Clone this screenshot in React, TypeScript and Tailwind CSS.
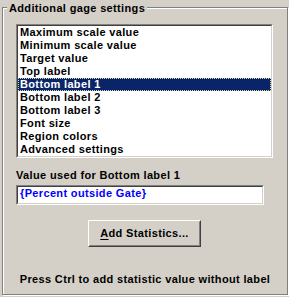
const items = [
  'Maximum scale value',
  'Minimum scale value',
  'Target value',
  'Top label',
  'Bottom label 1',
  'Bottom label 2',
  'Bottom label 3',
  'Font size',
  'Region colors',
  'Advanced settings',
];

const selected = 4;

export default function App() {
  return (
    <div
      className="w-[289px] h-[297px] bg-[#d4d0c8] overflow-hidden pl-[2px] pt-[7px] text-[11px] leading-[13px] font-bold text-black tracking-[0.35px]"
      style={{ fontFamily: '"Liberation Sans", Arial, sans-serif' }}
    >
      {/* group box */}
      <div className="relative w-[286px] h-[288px] border border-[#808080] shadow-[1px_1px_0_#ffffff,inset_1px_1px_0_#ffffff]">
        <div className="absolute top-[-6px] left-[4px] px-[2px] bg-[#d4d0c8] whitespace-nowrap">
          Additional gage settings
        </div>

        <div className="flex flex-col pt-[16px]">
          {/* list box */}
          <div className="ml-[13px] w-[257px] h-[134px] border border-t-[#808080] border-l-[#808080] border-r-white border-b-white">
            <div className="h-full border border-t-[#404040] border-l-[#404040] border-r-[#d4d0c8] border-b-[#d4d0c8] bg-white">
              {items.map((item, i) => (
                <div
                  key={item}
                  className={
                    i === selected
                      ? 'h-[13px] pl-[1px] bg-[#0a246a] text-white border border-dotted border-[#d8d8a0] leading-[11px] whitespace-nowrap'
                      : 'h-[13px] pl-[2px] whitespace-nowrap'
                  }
                >
                  {item}
                </div>
              ))}
            </div>
          </div>

          <div className="ml-[13px] mt-[11px] whitespace-nowrap">Value used for Bottom label 1</div>

          {/* edit box */}
          <div className="ml-[13px] mt-[3px] w-[248px] h-[20px] border border-t-[#808080] border-l-[#808080] border-r-white border-b-white">
            <div className="h-full border border-t-[#404040] border-l-[#404040] border-r-[#d4d0c8] border-b-[#d4d0c8] bg-white pl-[2px] text-[#0000ff] whitespace-nowrap">
              {'{Percent outside Gate}'}
            </div>
          </div>

          {/* button */}
          <div className="mt-[15px] ml-[85px] w-[113px] h-[27px] border border-t-white border-l-white border-r-[#404040] border-b-[#404040]">
            <div className="h-full flex items-center justify-center border border-t-[#d4d0c8] border-l-[#d4d0c8] border-r-[#808080] border-b-[#808080] whitespace-nowrap">
              <span className="underline underline-offset-[2px]">A</span>dd Statistics...
            </div>
          </div>

          <div className="mt-[26px] text-center whitespace-nowrap">
            Press Ctrl to add statistic value without label
          </div>
        </div>
      </div>
    </div>
  );
}
